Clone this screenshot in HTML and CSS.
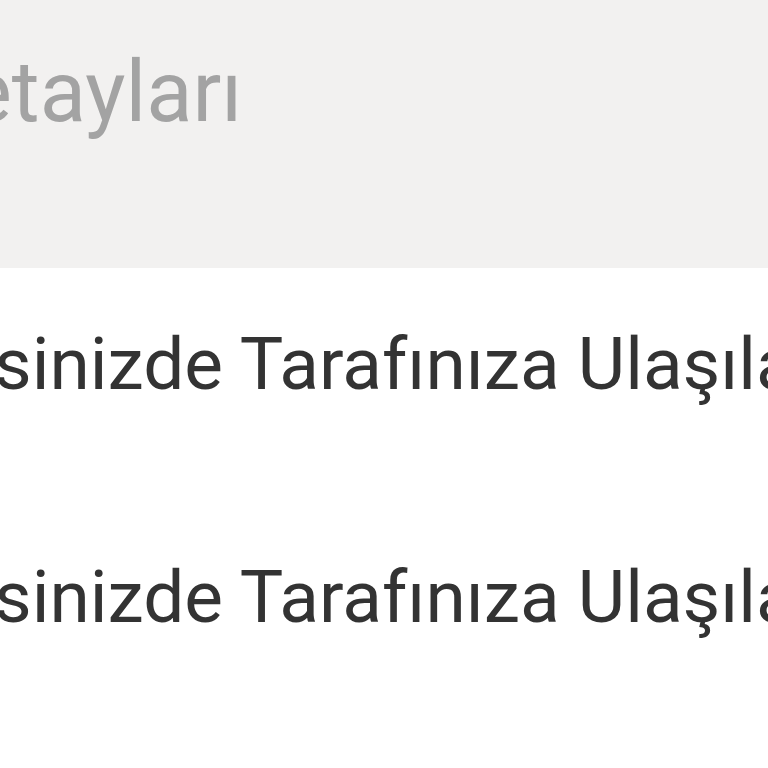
FILE: index.html
```html
<!DOCTYPE html>
<html lang="tr">
<head>
<meta charset="utf-8">
<link rel="stylesheet" href="styles.css">
</head>
<body>
<div class="page">
  <header class="head">
    <h1 class="title">Detayları</h1>
  </header>
  <ul class="list">
    <li class="row"><span class="text">sinizde Tarafınıza Ulaşılacaktır</span></li>
    <li class="row"><span class="text">sinizde Tarafınıza Ulaşılacaktır</span></li>
  </ul>
</div>
</body>
</html>
```
FILE: styles.css
```css
html, body {
  margin: 0;
  padding: 0;
  background: #ffffff;
}
.page {
  width: 768px;
  height: 768px;
  overflow: hidden;
  font-family: Roboto, "Noto Sans", sans-serif;
}
.head {
  height: 268px;
  background: #f2f1f0;
  display: flex;
  align-items: flex-start;
  overflow: hidden;
}
.title {
  margin: 0;
  margin-left: -89px;
  margin-top: 42px;
  font-size: 85px;
  line-height: 100px;
  font-weight: 400;
  color: #a3a3a3;
  white-space: nowrap;
}
.list {
  list-style: none;
  margin: 0;
  padding: 0;
}
.row {
  height: 233px;
  display: flex;
  align-items: flex-start;
  overflow: hidden;
}
.text {
  margin-left: -6px;
  margin-top: 51px;
  font-size: 73px;
  line-height: 90px;
  color: #333333;
  white-space: nowrap;
}
```
